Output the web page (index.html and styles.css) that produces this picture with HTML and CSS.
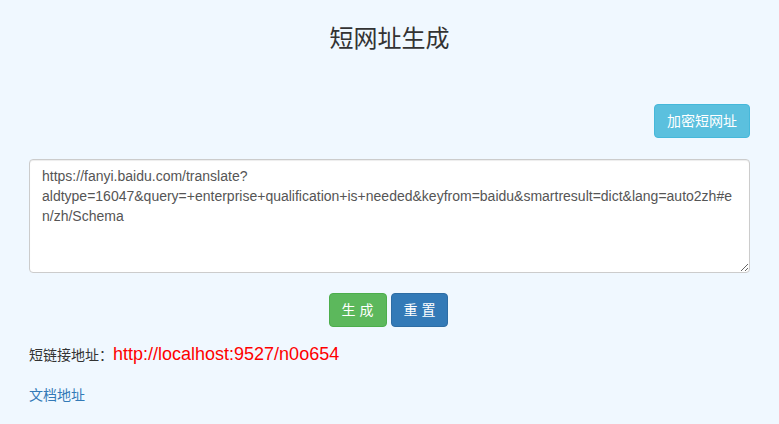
FILE: index.html
```html
<!DOCTYPE html>
<html lang="zh">
<head>
<meta charset="utf-8">
<title>短网址生成</title>
<link rel="stylesheet" href="styles.css">
</head>
<body>
<div class="page">
  <h3 class="title">短网址生成</h3>
  <div class="toolbar">
    <button class="btn btn-info">加密短网址</button>
  </div>
  <textarea class="url-input">https://fanyi.baidu.com/translate?aldtype=16047&amp;query=+enterprise+qualification+is+needed&amp;keyfrom=baidu&amp;smartresult=dict&amp;lang=auto2zh#en/zh/Schema</textarea>
  <div class="actions">
    <button class="btn btn-success">生 成</button>
    <button class="btn btn-primary">重 置</button>
  </div>
  <div class="result">
    <span class="label">短链接地址：</span><a class="short-link" href="#">http://localhost:9527/n0o654</a>
  </div>
  <div class="docs">
    <a class="doc-link" href="#">文档地址</a>
  </div>
</div>
</body>
</html>
```
FILE: styles.css
```css
* { box-sizing: border-box; }
html, body {
  margin: 0;
  padding: 0;
  background: #f0f8ff;
}
body {
  font-family: "Liberation Sans", Arial, "Noto Sans CJK SC", sans-serif;
  font-size: 14px;
  line-height: 1.42857;
  color: #333;
}
.page {
  padding: 0 29px;
}
.title {
  margin: 0;
  padding-top: 26px;
  font-size: 24px;
  font-weight: 400;
  line-height: 1.1;
  text-align: center;
  color: #333;
}
.toolbar {
  display: flex;
  justify-content: flex-end;
  margin-top: 52px;
}
.btn {
  display: inline-block;
  height: 34px;
  padding: 6px 12px;
  font-family: inherit;
  font-size: 14px;
  line-height: 20px;
  border: 1px solid transparent;
  border-radius: 4px;
  color: #fff;
  cursor: pointer;
}
.btn-info { background: #5bc0de; border-color: #46b8da; }
.btn-success { background: #5cb85c; border-color: #4cae4c; }
.btn-primary { background: #337ab7; border-color: #2e6da4; }
.url-input {
  display: block;
  width: 100%;
  height: 114px;
  margin-top: 21px;
  padding: 6px 12px;
  font-family: inherit;
  font-size: 14px;
  line-height: 20px;
  color: #555;
  background: #fff;
  border: 1px solid #ccc;
  border-radius: 4px;
  box-shadow: inset 0 1px 1px rgba(0,0,0,.075);
  resize: vertical;
}
.actions {
  display: flex;
  justify-content: center;
  gap: 4px;
  margin-top: 20px;
  padding-right: 2px;
}
.result {
  margin-top: 15px;
  display: flex;
  align-items: baseline;
}
.label {
  font-size: 14px;
  color: #333;
}
.short-link {
  font-size: 18px;
  color: #ff0000;
  text-decoration: none;
}
.docs {
  margin-top: 18px;
}
.doc-link {
  color: #337ab7;
  text-decoration: none;
}
```
